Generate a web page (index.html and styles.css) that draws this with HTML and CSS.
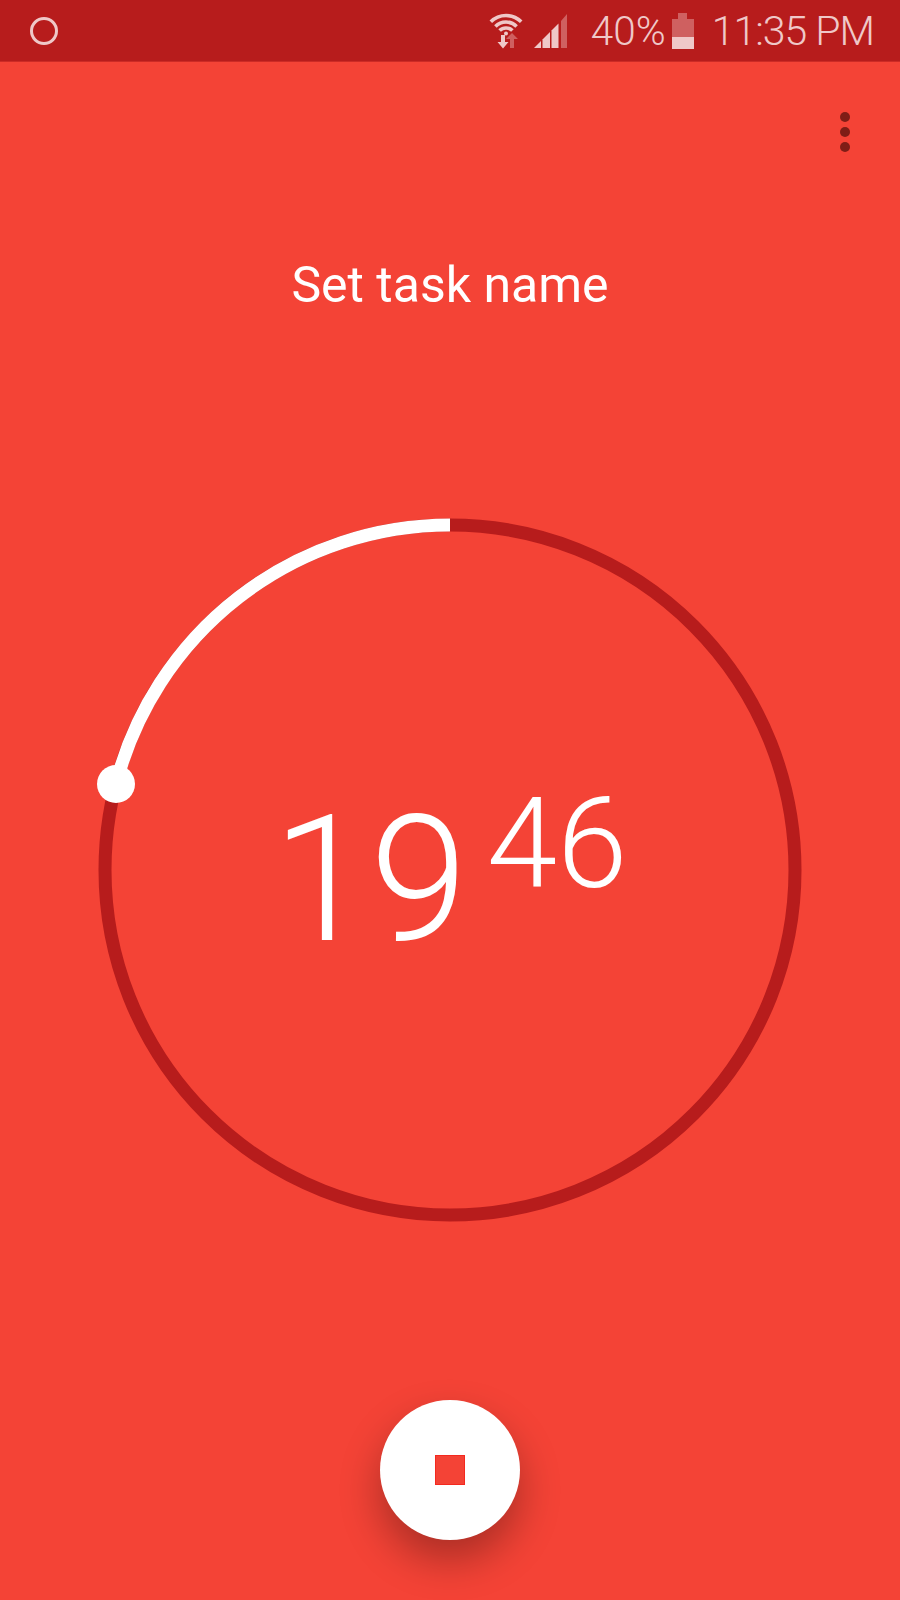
FILE: index.html
```html
<!DOCTYPE html>
<html lang="en">
<head>
    <meta charset="UTF-8">
    <meta name="viewport" content="width=device-width, initial-scale=1.0">
    <title>Task Timer</title>
    <link rel="stylesheet" href="styles.css">
</head>
<body>
    <header class="status-bar">
        <span class="notify-ring"></span>
        <div class="status-right">
            <svg class="wifi-icon" viewBox="0 0 34 36" width="34" height="36">
                <path d="M1.800 8.800 A 21.500 21.500 0 0 1 32.200 8.800" fill="none" stroke="#efc8c8" stroke-width="3.600"/>
                <path d="M6.400 13.400 A 15 15 0 0 1 27.600 13.400" fill="none" stroke="#efc8c8" stroke-width="3.600"/>
                <path d="M10.600 17.600 A 9 9 0 0 1 23.400 17.600" fill="none" stroke="#efc8c8" stroke-width="3.600"/>
                <circle cx="17" cy="20.500" r="2" fill="#efc8c8"/>
                <path d="M23 20 L29 26 H25 V35 H21 V26 H17 Z" fill="#cf6060"/>
                <path d="M12 22 H16 V29 H19.500 L14 35.500 L8.500 29 H12 Z" fill="#efc8c8"/>
            </svg>
            <svg class="signal-icon" viewBox="0 0 33 34" width="33" height="34">
                <path d="M0 34 L7 27 V34 Z" fill="#efc8c8"/>
                <path d="M8.500 25.500 L16 18 V34 H8.500 Z" fill="#efc8c8"/>
                <path d="M17.500 16.500 L24.500 9.500 V34 H17.500 Z" fill="#efc8c8"/>
                <path d="M27 7 L33 0 V34 H27 Z" fill="#cf6060"/>
            </svg>
            <span class="battery-text">40%</span>
            <div class="battery">
                <span class="battery-cap"></span>
                <span class="battery-empty"></span>
                <span class="battery-full"></span>
            </div>
            <span class="clock">11:35 PM</span>
        </div>
    </header>

    <div class="toolbar">
        <div class="menu-dots">
            <span></span>
            <span></span>
            <span></span>
        </div>
    </div>

    <main class="timer">
        <h1 class="task-name">Set task name</h1>

        <div class="dial">
            <svg class="dial-ring" viewBox="0 0 702 702" width="702" height="702">
                <circle cx="351" cy="351" r="345" fill="none" stroke="#b71c1c" stroke-width="13"/>
                <path d="M351 6 A 345 345 0 0 0 17 265" fill="none" stroke="#fff" stroke-width="13"/>
                <circle cx="17" cy="265" r="19" fill="#fff"/>
            </svg>
            <div class="time">
                <span class="minutes">19</span>
                <span class="seconds">46</span>
            </div>
        </div>

        <button class="stop-btn"><span class="stop-icon"></span></button>
    </main>
</body>
</html>
```

FILE: styles.css
```css
body {
    font-family: 'Roboto', sans-serif;
    font-weight: 300;
    margin: 0;
    padding: 0;
    background-color: #f44336;
    color: white;
    width: 900px;
    height: 1600px;
    overflow: hidden;
}

.status-bar {
    background-color: #b71c1c;
    height: 62px;
    box-sizing: border-box;
    padding: 0 26px 0 30px;
    display: flex;
    justify-content: space-between;
    align-items: center;
    border-bottom: 1px solid #cc2b26;
    color: #efc8c8;
}

.notify-ring {
    width: 28px;
    height: 28px;
    box-sizing: border-box;
    border: 3.5px solid #efc8c8;
    border-radius: 50%;
}

.status-right {
    display: flex;
    align-items: center;
}

.wifi-icon {
    margin-right: 11px;
}

.signal-icon {
    margin-right: 24px;
}

.battery-text {
    font-size: 40.5px;
    margin-right: 6px;
}

.battery {
    width: 22px;
    height: 36px;
    display: flex;
    flex-direction: column;
    align-items: center;
    margin-right: 18px;
}

.battery-cap {
    width: 9px;
    height: 6px;
    background-color: #cf6060;
}

.battery-empty {
    width: 100%;
    height: 18px;
    background-color: #cf6060;
}

.battery-full {
    width: 100%;
    height: 12px;
    background-color: #efc8c8;
}

.clock {
    font-size: 41px;
    letter-spacing: -1px;
}

.toolbar {
    display: flex;
    justify-content: flex-end;
    padding: 50px 50px 0 0;
}

.menu-dots {
    display: flex;
    flex-direction: column;
    gap: 5px;
}

.menu-dots span {
    width: 10px;
    height: 10px;
    border-radius: 50%;
    background-color: #7f1d16;
}

.timer {
    display: flex;
    flex-direction: column;
    align-items: center;
}

.task-name {
    font-size: 50px;
    font-weight: 400;
    line-height: 60px;
    margin: 103px 0 0 0;
}

.dial {
    position: relative;
    width: 702px;
    height: 702px;
    margin-top: 204px;
}

.dial-ring {
    display: block;
    overflow: visible;
}

.time {
    position: absolute;
    top: 258px;
    left: 0;
    right: 0;
    display: flex;
    justify-content: center;
    align-items: flex-start;
    gap: 19px;
}

.minutes {
    font-size: 176px;
    line-height: 206px;
}

.seconds {
    font-size: 127px;
    line-height: 149px;
    margin-top: -8px;
}

.stop-btn {
    width: 140px;
    height: 140px;
    margin-top: 179px;
    padding: 0;
    border: none;
    border-radius: 50%;
    background-color: white;
    box-shadow: 0 20px 40px rgba(0, 0, 0, 0.3);
    display: flex;
    justify-content: center;
    align-items: center;
}

.stop-icon {
    width: 30px;
    height: 30px;
    box-sizing: border-box;
    background-color: #f44336;
    border: 1px solid #f4291f;
}
```
